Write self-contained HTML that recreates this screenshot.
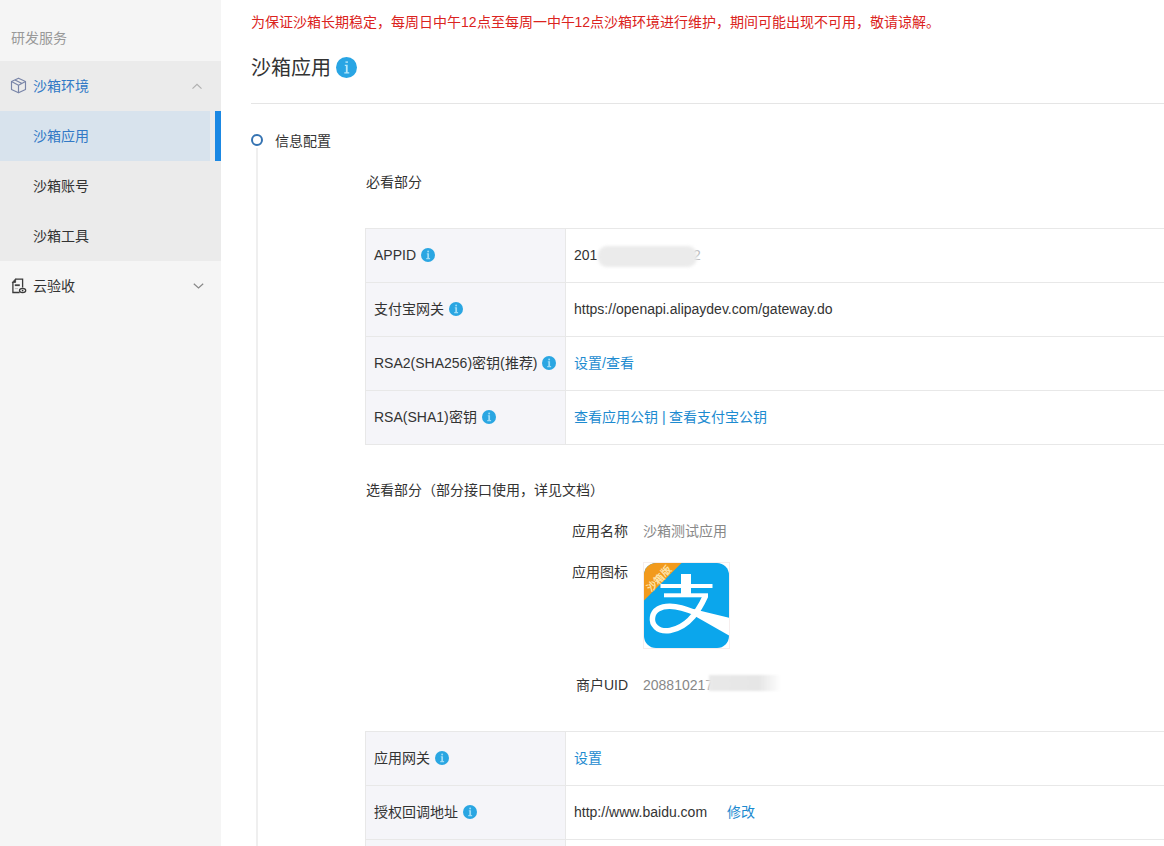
<!DOCTYPE html>
<html lang="zh-CN"><head><meta charset="utf-8">
<style>
*{margin:0;padding:0;box-sizing:border-box}
html,body{width:1164px;height:846px;overflow:hidden;background:#fff;font-family:"Liberation Sans",sans-serif;color:#333}
.side{position:absolute;left:0;top:0;width:221px;height:846px;background:#f5f5f5}
.side .cap{position:absolute;left:11px;top:29px;font-size:14px;color:#999;line-height:18px;white-space:nowrap}
.grp{position:absolute;left:0;top:61px;width:221px;height:200px;background:#ebebeb}
.row{position:absolute;left:0;width:221px;height:50px;line-height:50px;font-size:14px;white-space:nowrap}
.row .t{position:absolute;left:33px;top:0}
.active{background:linear-gradient(to right,#d8e3ed 210px,#e9ebed 210px);color:#3179c6}
.active:after{content:"";position:absolute;right:0;top:0;width:6px;height:50px;background:#1b88e3}
.ico{position:absolute}
.main{position:absolute;left:251px;top:0;width:913px;height:846px}
.abs{position:absolute;white-space:nowrap}
.notice{left:0;top:13px;font-size:14px;color:#db2320;line-height:18px}
.title{left:0;top:55px;font-size:20px;color:#333;line-height:26px}
.info{position:absolute;border-radius:50%;background:#2ba6df}
.hr{position:absolute;left:0;top:103px;width:913px;height:1px;background:#e5e5e5}
.tl-dot{position:absolute;left:0;top:134px;width:12px;height:12px;border:2px solid #3573b2;border-radius:50%;background:#fff}
.tl-line{position:absolute;left:5px;top:148px;width:2px;height:700px;background:#efefef}
.sec{font-size:14px;line-height:18px}
.tbl{position:absolute;left:114px;width:800px;border-top:1px solid #e8e8e8;border-left:1px solid #e8e8e8}
.tr{position:relative;height:54px;border-bottom:1px solid #e8e8e8}
.tr .l{position:absolute;left:0;top:0;width:200px;height:53px;background:#f5f5f9;border-right:1px solid #e8e8e8}
.tr .lt{position:absolute;left:8px;top:17px;font-size:14px;line-height:18px;white-space:nowrap}
.tr .rt{position:absolute;left:208px;top:17px;font-size:14px;line-height:18px;white-space:nowrap}
.ii{display:inline-block;vertical-align:top;margin-top:2px;margin-left:5px}
.blue{color:#1d8bd0}
.gray{color:#888}
.kv{font-size:14px;line-height:18px}
</style></head><body>
<div class="side">
  <div class="cap">研发服务</div>
  <div class="grp" style="top:61px;height:200px"></div>
  <div class="row" style="top:61px;color:#3179c6"><span class="t">沙箱环境</span></div>
  <svg class="ico" style="left:10px;top:77px" width="17" height="17" viewBox="0 0 17 17" fill="none" stroke="#7985a8" stroke-width="1.15" stroke-linejoin="round">
    <path d="M8.5 1.2 L15.5 4.6 L15.5 12.4 L8.5 15.8 L1.5 12.4 L1.5 4.6 Z"/>
    <path d="M1.5 4.6 L8.5 8.2 L15.5 4.6 M8.5 8.2 L8.5 15.8 M5 2.9 L12 6.4"/>
  </svg>
  <svg class="ico" style="left:191px;top:83px" width="12" height="7" viewBox="0 0 12 7" fill="none" stroke="#b0b0b0" stroke-width="1.2"><path d="M1.5 5.6 L6 1.3 L10.5 5.6"/></svg>
  <div class="row active" style="top:111px"><span class="t">沙箱应用</span></div>
  <div class="row" style="top:161px"><span class="t">沙箱账号</span></div>
  <div class="row" style="top:211px"><span class="t">沙箱工具</span></div>
  <div class="row" style="top:261px"><span class="t">云验收</span></div>
  <svg class="ico" style="left:11px;top:278px" width="16" height="16" viewBox="0 0 16 16" fill="none" stroke="#3a3a3a" stroke-width="1.3">
    <path d="M4.3 1.2 L11.6 1.2 L11.6 9.6"/>
    <path d="M8.6 14.5 L1.9 14.5 L1.9 4"/>
    <path d="M1.3 4.4 L4.6 0.8 L4.6 4.4 Z" fill="#3a3a3a" stroke-width="0.8"/>
    <path d="M3.8 7.2 L8.8 7.2" stroke-width="1.8" stroke="#444"/>
    <path d="M3.8 10.6 L7 10.6" stroke-width="0.9" stroke="#bbb"/>
    <ellipse cx="11.6" cy="12.6" rx="3.1" ry="2.1" fill="#fff" stroke-width="1.3"/>
    <circle cx="11.6" cy="12.6" r="0.9" fill="#333" stroke="none"/>
  </svg>
  <svg class="ico" style="left:193px;top:283px" width="11" height="6" viewBox="0 0 11 6" fill="none" stroke="#888" stroke-width="1.2"><path d="M0.8 0.8 L5.5 5 L10.2 0.8"/></svg>
</div>
<div class="main">
  <div class="abs notice">为保证沙箱长期稳定，每周日中午12点至每周一中午12点沙箱环境进行维护，期间可能出现不可用，敬请谅解。</div>
  <div class="abs title">沙箱应用</div>
  <svg class="abs" style="left:85px;top:57px" width="21" height="21" viewBox="0 0 20 20"><circle cx="10" cy="10" r="10" fill="#29a5e4"/><rect x="9" y="4.2" width="2.4" height="1.3" fill="#b8e8fb"/><path d="M8.4 7.4 L11.1 7.4 L11.1 14.6 L12.6 14.6 L12.6 15.8 L7.9 15.8 L7.9 14.6 L9.4 14.6 L9.4 8.6 L8.4 8.6 Z" fill="#b8e8fb"/></svg>
  <div class="hr"></div>
  <div class="tl-dot"></div>
  <div class="tl-line"></div>
  <div class="abs sec" style="left:24px;top:132px">信息配置</div>
  <div class="abs sec" style="left:115px;top:173px">必看部分</div>
  <div class="tbl" style="top:228px">
    <div class="tr"><div class="l"></div><span class="lt">APPID<svg class="ii" width="14" height="14" viewBox="0 0 20 20"><circle cx="10" cy="10" r="10" fill="#2aa6e2"/><circle cx="10.2" cy="5" r="1.4" fill="#9fdcf6"/><path d="M8.3 7.6 L11.5 7.6 L11.5 14.4 L13 14.4 L13 16 L7.5 16 L7.5 14.4 L9 14.4 L9 9 L8.3 9 Z" fill="#9fdcf6"/></svg></span><span class="rt">201</span><span class="rt" style="left:327px;color:#bbb">2</span><div style="position:absolute;left:232px;top:17px;width:99px;height:21px;border-radius:9px;background:#ebebeb;filter:blur(1.5px)"></div></div>
    <div class="tr"><div class="l"></div><span class="lt">支付宝网关<svg class="ii" width="14" height="14" viewBox="0 0 20 20"><circle cx="10" cy="10" r="10" fill="#2aa6e2"/><circle cx="10.2" cy="5" r="1.4" fill="#9fdcf6"/><path d="M8.3 7.6 L11.5 7.6 L11.5 14.4 L13 14.4 L13 16 L7.5 16 L7.5 14.4 L9 14.4 L9 9 L8.3 9 Z" fill="#9fdcf6"/></svg></span><span class="rt">https://openapi.alipaydev.com/gateway.do</span></div>
    <div class="tr"><div class="l"></div><span class="lt">RSA2(SHA256)密钥(推荐)<svg class="ii" width="14" height="14" viewBox="0 0 20 20"><circle cx="10" cy="10" r="10" fill="#2aa6e2"/><circle cx="10.2" cy="5" r="1.4" fill="#9fdcf6"/><path d="M8.3 7.6 L11.5 7.6 L11.5 14.4 L13 14.4 L13 16 L7.5 16 L7.5 14.4 L9 14.4 L9 9 L8.3 9 Z" fill="#9fdcf6"/></svg></span><span class="rt blue">设置/查看</span></div>
    <div class="tr"><div class="l"></div><span class="lt">RSA(SHA1)密钥<svg class="ii" width="14" height="14" viewBox="0 0 20 20"><circle cx="10" cy="10" r="10" fill="#2aa6e2"/><circle cx="10.2" cy="5" r="1.4" fill="#9fdcf6"/><path d="M8.3 7.6 L11.5 7.6 L11.5 14.4 L13 14.4 L13 16 L7.5 16 L7.5 14.4 L9 14.4 L9 9 L8.3 9 Z" fill="#9fdcf6"/></svg></span><span class="rt blue">查看应用公钥 | 查看支付宝公钥</span></div>
  </div>
  <div class="abs sec" style="left:115px;top:481px">选看部分（部分接口使用，详见文档）</div>
  <div class="abs kv" style="left:321px;top:522px">应用名称</div>
  <div class="abs kv gray" style="left:392px;top:522px">沙箱测试应用</div>
  <div class="abs kv" style="left:321px;top:563px">应用图标</div>
  <svg class="abs" style="left:392px;top:562px" width="87" height="87" viewBox="0 0 87 87">
    <defs><clipPath id="rc"><rect x="1" y="1" width="85" height="85" rx="12" ry="12"/></clipPath></defs>
    <rect x="0.5" y="0.5" width="86" height="86" fill="none" stroke="#f6eeee" stroke-width="1"/>
    <g clip-path="url(#rc)">
      <rect x="0" y="0" width="87" height="87" fill="#0ba6ec"/>
      <path d="M0 0 L39.5 0 L0 39.5 Z" fill="#f29a1c"/>
      <text x="0" y="0" transform="translate(16,16.5) rotate(-45)" text-anchor="middle" dominant-baseline="central" font-size="10" fill="#fde3a8" font-weight="bold">沙箱版</text>
      <rect x="17.5" y="22" width="52" height="4" fill="#fff"/>
      <rect x="38" y="12" width="10" height="20" fill="#fff"/>
      <rect x="21" y="31.3" width="44" height="4" fill="#fff"/>
      <path d="M62.5 34 C57 46, 47 65, 27 68.5 C14 70.5, 8.5 62, 9.5 55.5 C10.5 48, 18 44, 27 44.2 C40 44.5, 50 50, 58 53" fill="none" stroke="#fff" stroke-width="5.5"/>
      <path d="M50 47 L87 56 L87 74 L50 53 Z" fill="#fff"/>
    </g>
  </svg>
  <div class="abs kv" style="left:325px;top:676px">商户UID</div>
  <div class="abs kv gray" style="left:392px;top:676px">20881021<span style="color:#aaa">7</span></div><div class="abs" style="left:458px;top:675px;width:72px;height:16px;background:linear-gradient(to right,#e9e9e9 0%,#e6e6e6 70%,rgba(240,240,240,0) 100%);filter:blur(1px)"></div>
  <div class="tbl" style="top:731px">
    <div class="tr"><div class="l"></div><span class="lt">应用网关<svg class="ii" width="14" height="14" viewBox="0 0 20 20"><circle cx="10" cy="10" r="10" fill="#2aa6e2"/><circle cx="10.2" cy="5" r="1.4" fill="#9fdcf6"/><path d="M8.3 7.6 L11.5 7.6 L11.5 14.4 L13 14.4 L13 16 L7.5 16 L7.5 14.4 L9 14.4 L9 9 L8.3 9 Z" fill="#9fdcf6"/></svg></span><span class="rt blue">设置</span></div>
    <div class="tr"><div class="l"></div><span class="lt">授权回调地址<svg class="ii" width="14" height="14" viewBox="0 0 20 20"><circle cx="10" cy="10" r="10" fill="#2aa6e2"/><circle cx="10.2" cy="5" r="1.4" fill="#9fdcf6"/><path d="M8.3 7.6 L11.5 7.6 L11.5 14.4 L13 14.4 L13 16 L7.5 16 L7.5 14.4 L9 14.4 L9 9 L8.3 9 Z" fill="#9fdcf6"/></svg></span><span class="rt">http://www.baidu.com</span><span class="rt blue" style="left:361px">修改</span></div>
    <div class="tr"><div class="l"></div></div>
  </div>
</div>
</body></html>
